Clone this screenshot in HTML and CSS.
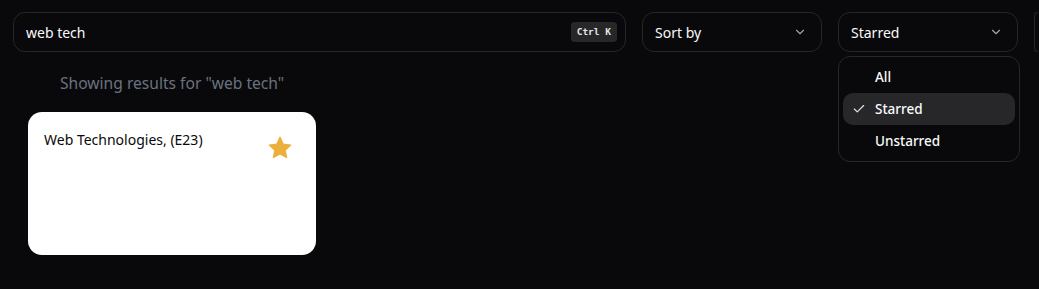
FILE: index.html
```html
<!DOCTYPE html>
<html>
<head>
<meta charset="utf-8">
<link rel="stylesheet" href="styles.css">
</head>
<body>
<div class="toolbar">
  <div class="search">
    <span class="search-text">web tech</span>
    <span class="kbd">Ctrl K</span>
  </div>
  <div class="select">
    <span>Sort by</span>
    <svg class="chev" width="14" height="14" viewBox="0 0 24 24" fill="none" stroke="currentColor" stroke-width="2" stroke-linecap="round" stroke-linejoin="round"><path d="m6 9 6 6 6-6"/></svg>
  </div>
  <div class="select-wrap">
    <div class="select">
      <span>Starred</span>
      <svg class="chev" width="14" height="14" viewBox="0 0 24 24" fill="none" stroke="currentColor" stroke-width="2" stroke-linecap="round" stroke-linejoin="round"><path d="m6 9 6 6 6-6"/></svg>
    </div>
    <div class="menu">
      <div class="item"><span class="check"></span>All</div>
      <div class="item active"><span class="check"><svg width="14" height="14" viewBox="0 0 24 24" fill="none" stroke="currentColor" stroke-width="2" stroke-linecap="round" stroke-linejoin="round"><path d="M20 6 9 17l-5-5"/></svg></span>Starred</div>
      <div class="item"><span class="check"></span>Unstarred</div>
    </div>
  </div>
  <div class="partial"></div>
</div>
<main class="content">
  <p class="showing">Showing results for "web tech"</p>
  <div class="card">
    <span class="card-title">Web Technologies, (E23)</span>
    <svg class="star" width="26" height="26" viewBox="0 0 24 24"><path fill="#ebb03b" d="M12 2.2l2.95 6.3 6.85.8-5.05 4.7 1.35 6.8L12 17.4l-6.1 3.4 1.35-6.8L2.2 9.3l6.85-.8z" stroke="#ebb03b" stroke-width="1.2" stroke-linejoin="round"/></svg>
  </div>
</main>
</body>
</html>
```

FILE: styles.css
```css
* { box-sizing: border-box; }
html, body { margin: 0; padding: 0; }
body {
  background: #09090b;
  color: #fafafa;
  font-family: "Noto Sans", "Open Sans", sans-serif;
  font-size: 14px;
  width: 1039px;
  height: 289px;
  overflow: hidden;
}
.toolbar {
  display: flex;
  gap: 16px;
  padding: 12px 0 0 13px;
}
.search {
  width: 613px;
  height: 40px;
  border: 1px solid #27272a;
  border-radius: 12px;
  display: flex;
  align-items: center;
  justify-content: space-between;
  padding: 0 8px 0 12px;
  flex: none;
}
.search-text { color: #fafafa; }
.kbd {
  font-family: "DejaVu Sans Mono", monospace;
  font-size: 9.5px;
  font-weight: bold;
  background: #27272a;
  color: #e4e4e7;
  border-radius: 4px;
  padding: 0 6px;
  height: 20px;
  line-height: 20px;
}
.select-wrap { position: relative; flex: none; }
.select {
  width: 180px;
  height: 40px;
  border: 1px solid #27272a;
  border-radius: 12px;
  display: flex;
  align-items: center;
  justify-content: space-between;
  padding: 0 14px 0 12px;
  flex: none;
}
.partial {
  width: 4px;
  height: 40px;
  border: 1px solid #27272a;
  border-right: none;
  border-radius: 12px 0 0 12px;
  flex: none;
}
.chev { color: #a1a1aa; }
.menu {
  position: absolute;
  top: 44px;
  left: 0;
  width: 182px;
  border: 1px solid #27272a;
  border-radius: 12px;
  background: #09090b;
  padding: 4px;
  z-index: 2;
}
.item {
  height: 32px;
  display: flex;
  align-items: center;
  border-radius: 10px;
  font-size: 13.5px;
  font-weight: 500;
}
.item.active { background: #27272a; }
.check {
  width: 32px;
  display: flex;
  justify-content: center;
  color: #e4e4e7;
}
.content { padding: 0 0 0 28px; }
.showing {
  margin: 18px 0 0 32px;
  height: 26px;
  line-height: 26px;
  font-size: 15.6px;
  color: #6b7280;
}
.card {
  margin-top: 16px;
  width: 288px;
  height: 143px;
  background: #ffffff;
  border-radius: 14px;
  display: flex;
  justify-content: space-between;
  align-items: flex-start;
  padding: 18px 23px 0 16px;
}
.card-title { color: #0a0a0a; font-size: 14px; }
.star { margin-top: 5px; }
```
